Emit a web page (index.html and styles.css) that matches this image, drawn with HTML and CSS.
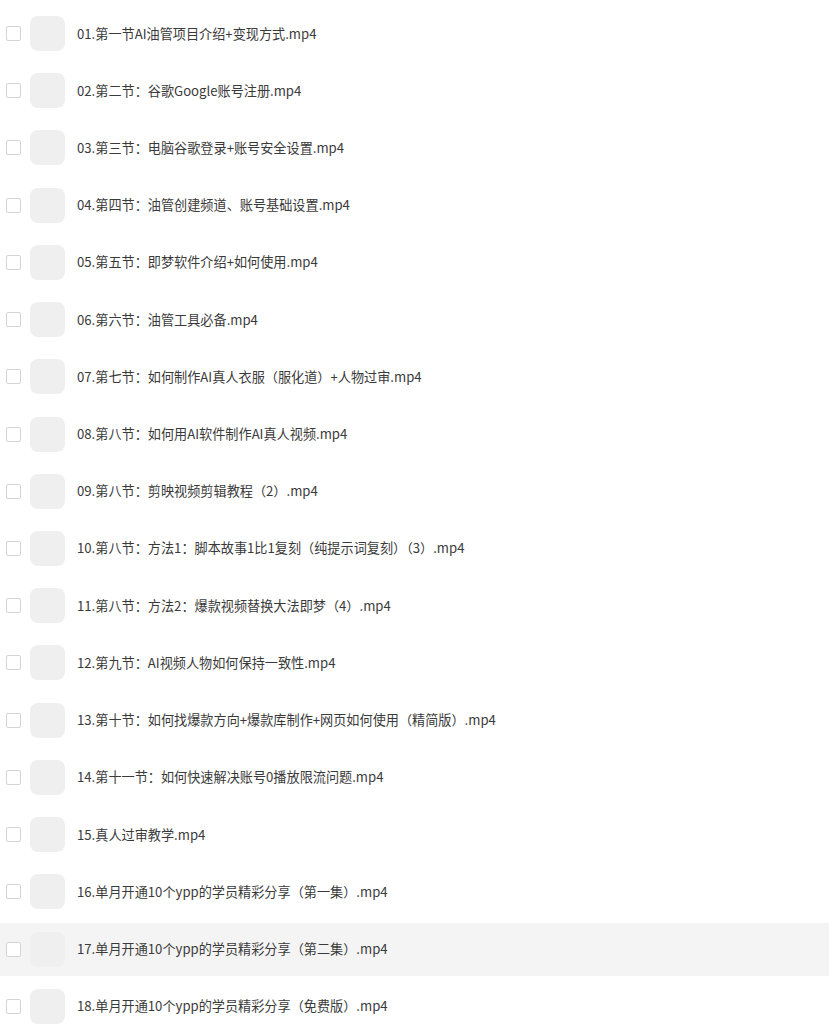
FILE: index.html
```html
<!DOCTYPE html>
<html lang="zh">
<head>
<meta charset="utf-8">
<link rel="stylesheet" href="styles.css">
</head>
<body>
<ul class="list">
  <li class="row"><span class="check"></span><span class="thumb"></span><span class="name">01.第一节AI油管项目介绍+变现方式.mp4</span></li>
  <li class="row"><span class="check"></span><span class="thumb"></span><span class="name">02.第二节：谷歌Google账号注册.mp4</span></li>
  <li class="row"><span class="check"></span><span class="thumb"></span><span class="name">03.第三节：电脑谷歌登录+账号安全设置.mp4</span></li>
  <li class="row"><span class="check"></span><span class="thumb"></span><span class="name">04.第四节：油管创建频道、账号基础设置.mp4</span></li>
  <li class="row"><span class="check"></span><span class="thumb"></span><span class="name">05.第五节：即梦软件介绍+如何使用.mp4</span></li>
  <li class="row"><span class="check"></span><span class="thumb"></span><span class="name">06.第六节：油管工具必备.mp4</span></li>
  <li class="row"><span class="check"></span><span class="thumb"></span><span class="name">07.第七节：如何制作AI真人衣服（服化道）+人物过审.mp4</span></li>
  <li class="row"><span class="check"></span><span class="thumb"></span><span class="name">08.第八节：如何用AI软件制作AI真人视频.mp4</span></li>
  <li class="row"><span class="check"></span><span class="thumb"></span><span class="name">09.第八节：剪映视频剪辑教程（2）.mp4</span></li>
  <li class="row"><span class="check"></span><span class="thumb"></span><span class="name">10.第八节：方法1：脚本故事1比1复刻（纯提示词复刻）（3）.mp4</span></li>
  <li class="row"><span class="check"></span><span class="thumb"></span><span class="name">11.第八节：方法2：爆款视频替换大法即梦（4）.mp4</span></li>
  <li class="row"><span class="check"></span><span class="thumb"></span><span class="name">12.第九节：AI视频人物如何保持一致性.mp4</span></li>
  <li class="row"><span class="check"></span><span class="thumb"></span><span class="name">13.第十节：如何找爆款方向+爆款库制作+网页如何使用（精简版）.mp4</span></li>
  <li class="row"><span class="check"></span><span class="thumb"></span><span class="name">14.第十一节：如何快速解决账号0播放限流问题.mp4</span></li>
  <li class="row"><span class="check"></span><span class="thumb"></span><span class="name">15.真人过审教学.mp4</span></li>
  <li class="row"><span class="check"></span><span class="thumb"></span><span class="name">16.单月开通10个ypp的学员精彩分享（第一集）.mp4</span></li>
  <li class="row active"><span class="check"></span><span class="thumb"></span><span class="name">17.单月开通10个ypp的学员精彩分享（第二集）.mp4</span></li>
  <li class="row"><span class="check"></span><span class="thumb"></span><span class="name">18.单月开通10个ypp的学员精彩分享（免费版）.mp4</span></li>
</ul>
</body>
</html>
```

FILE: styles.css
```css
html, body {
  margin: 0;
  padding: 0;
  background: #ffffff;
}
body {
  font-family: "Noto Sans CJK SC", "Noto Sans", sans-serif;
  color: #3a3a3a;
  overflow: hidden;
}
.list {
  list-style: none;
  margin: 0;
  padding: 7px 0 0 0;
}
.row {
  display: flex;
  align-items: center;
  height: 53px;
  margin-bottom: 4.23px;
  padding-left: 6px;
  box-sizing: border-box;
}
.row.active {
  background: #f4f4f4;
}
.check {
  width: 15px;
  height: 15px;
  box-sizing: border-box;
  border: 1px solid #d4d4d4;
  border-radius: 2px;
  background: #fff;
  flex: none;
}
.thumb {
  width: 35px;
  height: 35px;
  margin-left: 9px;
  border-radius: 8px;
  background: #efefef;
  flex: none;
}
.name {
  margin-left: 12px;
  font-size: 13.15px;
  line-height: 18px;
  white-space: nowrap;
}
```
